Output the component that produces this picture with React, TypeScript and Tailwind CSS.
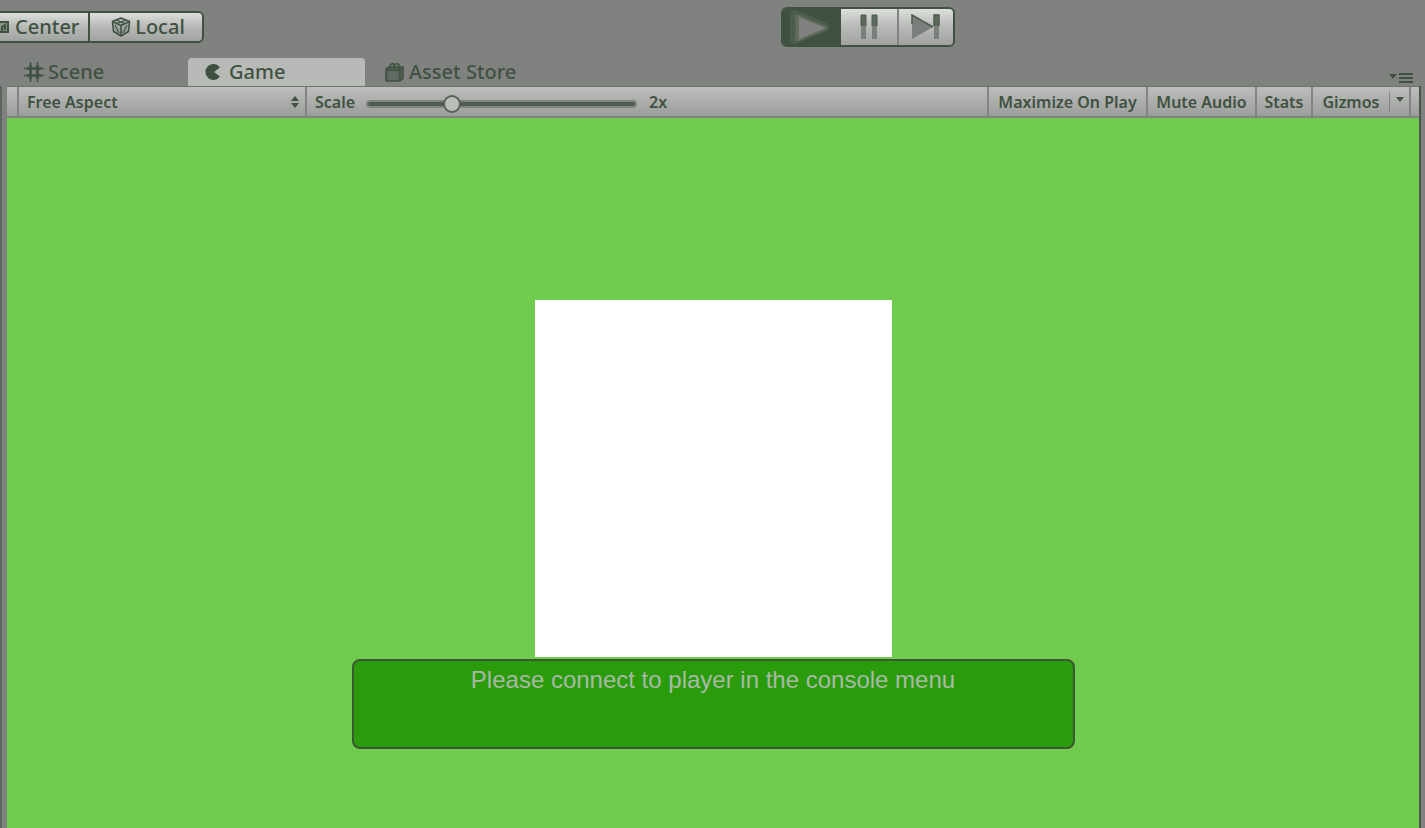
import React, { useState } from 'react';

const bevel = 'bg-linear-to-b from-[#dcdfdc] via-[#b6b9b6] to-[#a0a3a0]';
const cell = 'flex h-full items-center justify-center border-r-2 border-[#828482]';

function PivotIcon() {
  return (
    <svg width="9" height="12" viewBox="0 0 9 12" fill="none" stroke="#3f5140" strokeWidth="2" aria-hidden="true">
      <path d="M0 1H8V11H0" fill="#3f5140" fillOpacity="0.4" />
      <path d="M2 11V6L5 4V9" />
    </svg>
  );
}

function CubeIcon() {
  return (
    <svg width="20" height="20" viewBox="0 0 20 20" fill="none" stroke="#3f5140" strokeWidth="1.6" strokeLinejoin="round" aria-hidden="true">
      <path d="M10 1L18.500 4.500L17.500 14.500L10 19L2.500 14.500L1.500 4.500Z" fill="#3f5140" fillOpacity="0.2" />
      <path d="M1.500 4.500L10 8.500L18.500 4.500M10 8.500V19" />
      <path d="M5 3L14 6.500M15 3L6 6.500M4 8L8 16M16 8L12 16" strokeWidth="1.200" />
    </svg>
  );
}

function SceneIcon() {
  return (
    <svg width="20" height="20" viewBox="0 0 20 20" fill="none" stroke="#3f5140" aria-hidden="true">
      <path d="M6.500 0V20M13.500 0V20M0 6.500H20M0 13.500H20" strokeWidth="1.500" />
      <path d="M6.500 3V17M13.500 3V17M3 6.500H17M3 13.500H17" strokeWidth="2.500" />
    </svg>
  );
}

function GameIcon() {
  return (
    <svg width="16" height="18" viewBox="0 0 16 18" aria-hidden="true">
      <path d="M15 4.500A8 8 0 1 0 15 13.500L9 9Z" fill="#3f5140" />
    </svg>
  );
}

function StoreIcon() {
  return (
    <svg width="20" height="20" viewBox="0 0 20 20" fill="none" stroke="#3f5140" aria-hidden="true">
      <path d="M1 7L4 5H18V16L15 19H1Z" fill="#3f5140" fillOpacity="0.55" strokeWidth="1.600" strokeLinejoin="round" />
      <path d="M5 8V4Q6 1 9 2V8M9 4Q12 0 14 3V8M1 8H15V19M15 8L18 5" strokeWidth="1.600" />
      <path d="M4 11H12M4 14H12M4 16.500H12" stroke="#6c766c" />
    </svg>
  );
}

export default function App() {
  const [scale, setScale] = useState(30);
  return (
    <div className="flex min-h-screen flex-col bg-[#808280] font-['Noto_Sans',sans-serif] font-medium text-[#3f5140]">
      <header className="flex h-[58px] items-start">
        <div className="mt-[11px] flex h-8 rounded-r-md border-2 border-l-0 border-[#3f5140]">
          <button className={`flex w-[90px] items-center gap-1.5 border-r-2 border-[#3f5140] text-xl leading-6 ${bevel}`}>
            <PivotIcon />
            Center
          </button>
          <button className={`flex w-[112px] items-center justify-center gap-1 rounded-r pl-1 text-xl leading-6 ${bevel}`}>
            <CubeIcon />
            Local
          </button>
        </div>
        <div className="grow-[577]" />
        <div className="mt-[7px] flex h-10 w-[174px] overflow-hidden rounded-md border-2 border-[#3f5140]">
          <button aria-label="Play" className="flex w-[58px] items-center justify-center bg-[#3f5140]">
            <svg width="48" height="34" viewBox="0 0 48 34" aria-hidden="true">
              <path d="M7 5L36 17L7 29Z" fill="#4c5c4d" stroke="#4c5c4d" strokeWidth="10" strokeLinejoin="round" />
              <path d="M9 6L38 18L9 30Z" fill="#626d62" stroke="#626d62" strokeWidth="3" strokeLinejoin="round" />
              <path d="M11 7L37 18L11 29Z" fill="#808280" />
            </svg>
          </button>
          <button aria-label="Pause" className={`flex w-[58px] items-center justify-center border-r-2 border-[#828482] ${bevel}`}>
            <svg width="18" height="26" viewBox="0 0 18 26" aria-hidden="true">
              <path d="M1 1H6V25H1ZM12 1H17V25H12Z" fill="#7c807c" />
              <path d="M1 1H6V12H1ZM12 1H17V12H12Z" fill="#5c695c" />
              <path d="M1 12V1H6V12M12 12V1H17V12" fill="none" stroke="#4c5b4d" strokeWidth="1" />
            </svg>
          </button>
          <button aria-label="Step" className={`flex flex-1 items-center justify-center ${bevel}`}>
            <svg width="30" height="26" viewBox="0 0 30 26" aria-hidden="true">
              <path d="M1 1L22 13L1 25ZM23 1H28V25H23Z" fill="#7c807c" />
              <path d="M23 1H28V12H23Z" fill="#5c695c" />
              <path d="M1 10V1L22 13M23 12V1H28V12" fill="none" stroke="#4c5b4d" strokeWidth="1.500" />
            </svg>
          </button>
        </div>
        <div className="grow-[470]" />
      </header>

      <div className="flex h-7 items-stretch pr-3 text-xl leading-6">
        <div role="tablist" className="flex">
          <button role="tab" aria-selected="false" className="flex w-[188px] items-center gap-1 pl-6">
            <SceneIcon />
            Scene
          </button>
          <button role="tab" aria-selected="true" className="flex w-[177px] items-center gap-2 rounded-t bg-[#b8bab8] pl-[17px]">
            <GameIcon />
            Game
          </button>
          <button role="tab" aria-selected="false" className="flex items-center gap-1 pl-5">
            <StoreIcon />
            Asset Store
          </button>
        </div>
        <button aria-label="Tab options" className="ml-auto flex items-end pb-0.5">
          <svg width="24" height="12" viewBox="0 0 24 12" fill="#3f5140" aria-hidden="true">
            <path d="M0 2H8L4 7ZM10 1H24V3H10ZM10 5H24V7H10ZM10 9H24V11H10Z" />
          </svg>
        </button>
      </div>

      <div className="mr-1 flex grow flex-col border-r-2 border-l-2 border-r-[#4b554b] border-l-[#5c665c] pl-[5px]">
        <div className="flex h-8 items-stretch border-t border-b-2 border-t-[#6c746c] border-b-[#828482] bg-linear-to-b from-[#bcbebc] to-[#9c9e9c] text-base leading-5 font-semibold">
          <div className={`${cell} w-3`} />
          <div className={`${cell} relative w-72`}>
            <select aria-label="Aspect ratio" className="h-full w-full appearance-none bg-transparent pl-2">
              <option>Free Aspect</option>
            </select>
            <svg className="pointer-events-none absolute right-1.5" width="8" height="12" viewBox="0 0 8 12" fill="#3f5140" aria-hidden="true">
              <path d="M0 5L4 0L8 5ZM0 7H8L4 12Z" />
            </svg>
          </div>
          <div className="flex grow items-center border-r-2 border-[#828482] pl-2">
            <label htmlFor="scale" className="w-[51px]">Scale</label>
            <input
              id="scale"
              type="range"
              min="0"
              max="100"
              value={scale}
              onChange={(e) => setScale(Number(e.target.value))}
              className="mt-1 h-5 w-[271px] appearance-none bg-transparent [&::-webkit-slider-runnable-track]:h-2 [&::-webkit-slider-runnable-track]:rounded-full [&::-webkit-slider-runnable-track]:border-2 [&::-webkit-slider-runnable-track]:border-[#828482] [&::-webkit-slider-runnable-track]:bg-[#4f5d50] [&::-webkit-slider-thumb]:-mt-[7px] [&::-webkit-slider-thumb]:size-[18px] [&::-webkit-slider-thumb]:appearance-none [&::-webkit-slider-thumb]:rounded-full [&::-webkit-slider-thumb]:border-2 [&::-webkit-slider-thumb]:border-[#566256] [&::-webkit-slider-thumb]:bg-[#babcba]"
            />
            <span className="ml-3">2x</span>
          </div>
          <button className={`${cell} w-[159px]`}>Maximize On Play</button>
          <button className={`${cell} w-[109px]`}>Mute Audio</button>
          <button className={`${cell} w-14`}>Stats</button>
          <button className={`${cell} w-[98px]`}>
            <span className="flex h-5 w-[77px] items-center justify-center border-r border-[#828482]">Gizmos</span>
            <span className="flex flex-1 justify-center pb-1">
              <svg width="8" height="5" viewBox="0 0 8 5" fill="#3f5140" aria-hidden="true">
                <path d="M0 0H8L4 5Z" />
              </svg>
            </span>
          </button>
          <div className="w-2" />
        </div>

        <main className="flex grow flex-col items-center bg-[#6fcc4e] pt-[182px]">
          <div className="size-[357px] bg-white" />
          <div className="mt-0.5 h-[90px] w-[723px] rounded-lg border-2 border-[#3c5636] bg-[#2a9c0c] pt-1.5 text-center font-['Liberation_Sans',sans-serif] text-2xl leading-[26px] font-normal text-[#a9b9a6]">
            Please connect to player in the console menu
          </div>
        </main>
      </div>
    </div>
  );
}
